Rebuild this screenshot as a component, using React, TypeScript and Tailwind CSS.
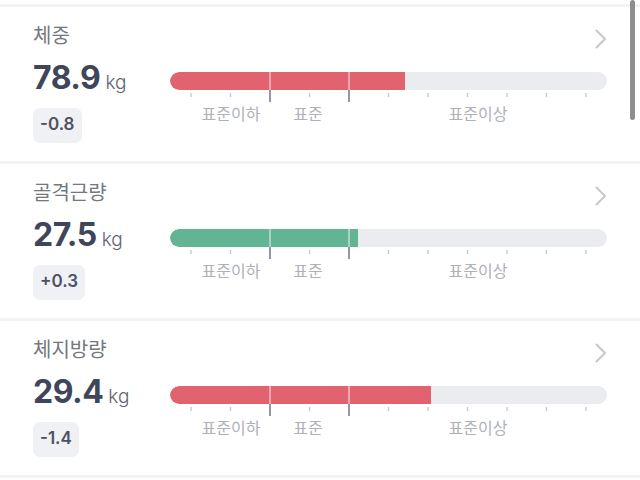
import React from "react";

type Metric = {
  title: string;
  value: string;
  delta: string;
  fill: number;
  color: string;
};

const metrics: Metric[] = [
  { title: "체중", value: "78.9", delta: "-0.8", fill: 235, color: "#e0636f" },
  { title: "골격근량", value: "27.5", delta: "+0.3", fill: 188, color: "#62b493" },
  { title: "체지방량", value: "29.4", delta: "-1.4", fill: 261, color: "#e0636f" },
];

const ticks = Array.from({ length: 11 }, (_, k) => 21 + 39.5 * k);
const dividers = [100, 179];

function Scale({ fill, color }: { fill: number; color: string }) {
  return (
    <div className="w-[437px]">
      <div className="relative h-[18px] w-[437px] overflow-hidden rounded-full bg-[#ebecef]">
        <div className="h-full rounded-l-full" style={{ width: fill, backgroundColor: color }} />
        <svg className="absolute left-0 top-0" width="437" height="18">
          {dividers
            .filter((d) => d < fill)
            .map((d) => (
              <line key={d} x1={d} x2={d} y1="0" y2="18" stroke="#ffffff" strokeOpacity="0.6" strokeWidth="1.5" />
            ))}
        </svg>
      </div>
      <svg width="437" height="12" className="block">
        {ticks.map((x, k) =>
          k === 2 || k === 4 ? (
            <line key={k} x1={x} x2={x} y1="0" y2="12" stroke="#7b7e86" strokeWidth="1.6" />
          ) : (
            <line key={k} x1={x} x2={x} y1="3" y2="7" stroke="#c3c5c9" strokeWidth="1.3" />
          )
        )}
      </svg>
      <div className="relative h-[22px] text-[16px] leading-[22px] text-[#aeb1b7] [font-family:'Noto_Sans_CJK_KR',sans-serif]">
        <span className="absolute left-[61px] top-0 -translate-x-1/2 whitespace-nowrap">표준이하</span>
        <span className="absolute left-[138px] top-0 -translate-x-1/2 whitespace-nowrap">표준</span>
        <span className="absolute left-[308px] top-0 -translate-x-1/2 whitespace-nowrap">표준이상</span>
      </div>
    </div>
  );
}

function Card({ m }: { m: Metric }) {
  return (
    <div className="h-[157px] border-t-[3px] border-[#f3f3f5] px-[33px] pt-[14px]">
      <div className="flex h-[28px] items-start justify-between">
        <span className="text-[20px] leading-[28px] text-[#73777f] [font-family:'Noto_Sans_CJK_KR',sans-serif]">
          {m.title}
        </span>
        <svg width="12" height="20" viewBox="0 0 12 20" className="mt-[8px]">
          <polyline points="1.5,1.5 10,10 1.5,18.5" fill="none" stroke="#c7c8cc" strokeWidth="2" strokeLinecap="round" strokeLinejoin="round" />
        </svg>
      </div>
      <div className="mt-[11px] flex">
        <div className="w-[137px] shrink-0">
          <div className="flex items-baseline [font-family:Inter,sans-serif]">
            <span className="text-[32px] font-bold leading-[36px] tracking-[-0.5px] text-[#3f4659]">{m.value}</span>
            <span className="ml-[5px] text-[19px] font-light text-[#5f6572]">kg</span>
          </div>
          <div className="mt-[10px] inline-flex h-[35px] items-center rounded-[7px] bg-[#f0f1f4] px-[7px] text-[17px] font-semibold text-[#4c5263] [font-family:Inter,sans-serif]">
            {m.delta}
          </div>
        </div>
        <div className="mt-[12px]">
          <Scale fill={m.fill} color={m.color} />
        </div>
      </div>
    </div>
  );
}

export default function App() {
  return (
    <div className="relative h-[480px] w-[640px] overflow-hidden bg-white pt-[4px]">
      {metrics.map((m) => (
        <Card key={m.title} m={m} />
      ))}
      <div className="border-t-[3px] border-[#f3f3f5]" />
      <div className="absolute right-[5px] top-0 h-[120px] w-[5px] rounded-full bg-[#8d8d8d]" />
    </div>
  );
}
